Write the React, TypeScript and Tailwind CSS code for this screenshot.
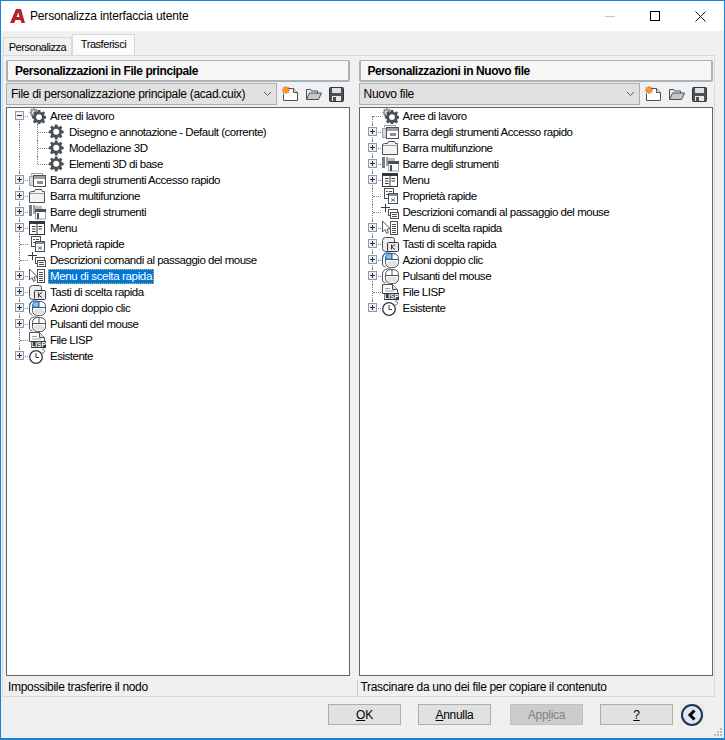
import type { ReactNode } from "react";

type IconName =
  | "workspaces" | "gear" | "qat" | "ribbon" | "toolbars" | "menu" | "quick"
  | "tooltip" | "shortcut" | "keys" | "dblclick" | "mouse" | "lisp" | "legacy";

interface TreeRow {
  label: string;
  icon: IconName;
  plus?: boolean;
  minus?: boolean;
  child?: boolean;
  selected?: boolean;
}

const gearPath =
  "M6.6 0h2.8l.4 2.2 1.2.5L12.900 1.400l2 2-1.300 1.900.5 1.200 2.200.4v2.800l-2.200.4-.5 1.200 1.300 1.900-2 2-1.900-1.300-1.200.5-.4 2.200H6.600l-.4-2.200-1.200-.5-1.900 1.300-2-2 1.300-1.900-.5-1.200L-.100 9.400V6.600l2.200-.4.500-1.200L1.300 3.100l2-2L5 2.700l1.200-.5z";

function Gear({ x = 0, y = 0, s = 1, fill = "#4b5055" }: { x?: number; y?: number; s?: number; fill?: string }) {
  return (
    <g transform={`translate(${x} ${y}) scale(${s})`}>
      <path d={gearPath} fill={fill} />
      <circle cx="8" cy="8" r="3.300" fill="#fff" />
    </g>
  );
}

function TreeIcon({ name }: { name: IconName }) {
  const dark = "#4b5055";
  const mid = "#9aa0a6";
  let body: ReactNode = null;
  if (name === "workspaces") {
    body = (
      <>
        <Gear x={1.500} y={0} s={0.55} fill="#8a8f94" />
        <Gear x={4} y={2} s={0.88} />
      </>
    );
  } else if (name === "gear") {
    body = <Gear x={1} y={0.500} s={0.9} />;
  } else if (name === "qat") {
    body = (
      <>
        <path d="M3.500 3.500V1.500h11v2" fill="none" stroke={mid} />
        <rect x="1.500" y="4.500" width="4" height="9" fill="#d8d8d8" stroke={mid} />
        <rect x="5.500" y="3.500" width="12" height="11" fill="#fff" stroke={dark} />
        <rect x="6" y="4" width="11" height="3" fill="#9aa0a6" />
        <rect x="9" y="9" width="6" height="3" fill="#8a8f94" />
      </>
    );
  } else if (name === "ribbon") {
    body = (
      <>
        <path d="M1.500 14.500v-10l2-1h3l1-2h6l1 2h2v11z" fill="#f4f4f4" stroke={dark} />
        <path d="M2 5.500h15" stroke={mid} />
      </>
    );
  } else if (name === "toolbars") {
    body = (
      <>
        <rect x="1" y="1" width="3" height="11" fill="#777c82" />
        <rect x="5" y="2" width="9" height="3" fill="#b8bcc0" />
        <rect x="5" y="1" width="2" height="9" fill="#9aa0a6" />
        <rect x="7.500" y="5.500" width="10" height="9.500" fill="#fff" stroke={mid} />
        <rect x="7" y="5" width="11" height="3" fill={dark} />
        <rect x="9" y="9" width="2" height="6" fill={dark} />
      </>
    );
  } else if (name === "menu") {
    body = (
      <>
        <rect x="1.500" y="1.500" width="15" height="13" fill="#fff" stroke="#33373b" />
        <rect x="2" y="2" width="14" height="2" fill="#33373b" />
        <path d="M9 3v11M4 6.500h3.500M4 9h3.500M4 11.500h3.500M10.500 6.500H14M10.500 9H14" stroke="#33373b" />
      </>
    );
  } else if (name === "quick") {
    body = (
      <>
        <rect x="3.500" y="0.500" width="9" height="10" fill="#fff" stroke={dark} />
        <path d="M5 3.500h2M8 3.500h3M5 6.500h2" stroke={dark} />
        <rect x="7.500" y="5.500" width="9" height="10" fill="#fff" stroke={dark} />
        <rect x="8" y="6" width="8" height="2" fill="#8a8f94" />
        <path d="M10 10.500l4 3M14 10.500l-4 3" stroke="#3b78a8" />
      </>
    );
  } else if (name === "tooltip") {
    body = (
      <>
        <path d="M0 3.500h9M4.500 0v8" stroke="#33373b" />
        <rect x="7.500" y="5.500" width="9" height="6" fill="#fff" stroke={dark} />
        <rect x="9.500" y="8.500" width="8" height="6" fill="#fff" stroke={dark} />
        <path d="M11 10.500h5M11 12.500h5" stroke={dark} />
      </>
    );
  } else if (name === "shortcut") {
    body = (
      <>
        <rect x="9.500" y="1.500" width="7" height="13" fill="#fff" stroke={dark} />
        <path d="M11 4.500h4M11 6.500h4M11 8.500h4M11 10.500h4M11 12.500h4" stroke={dark} />
        <path d="M1.500 1v11l2.500-2.500 1.500 4 2-1-1.500-3.500h3.500z" fill="#fff" stroke="#55595e" />
      </>
    );
  } else if (name === "keys") {
    body = (
      <>
        <path d="M1.500 4.500a3 3 0 0 1 3-3h7a2 2 0 0 1 2 2v3h-5v9h-4a3 3 0 0 1-3-3z" fill="#eee" stroke={dark} />
        <rect x="6.500" y="6.500" width="11" height="9" rx="1" fill="#e8e8e8" stroke="#33373b" />
        <path d="M10.500 8.500v5M14 8.500l-3.500 2.500 3.500 2.500" fill="none" stroke="#33373b" />
      </>
    );
  } else if (name === "dblclick" || name === "mouse") {
    body = (
      <>
        <path d="M1.500 12V6c0-3 2-5 5-5h2c2 0 3 1 3.500 2" fill="none" stroke={dark} />
        <path d="M1.500 12c0 1.500 1 2.500 3 3" fill="none" stroke={dark} />
        <rect x="4.500" y="1.500" width="13" height="14" rx="5" fill="#fff" stroke={dark} />
        <path d="M4.500 7.500h13M11 1.500v6" stroke={dark} />
        <rect x="6" y="9" width="10" height="5" rx="2" fill="#e2e2e2" />
        {name === "dblclick" && (
          <>
            <path d="M1.500 6.500c0-3 2-5.500 5-5.500" fill="none" stroke="#2b7fd6" strokeWidth="1.500" />
            <path d="M5 7V3.500C5 2.500 7 1.800 10.500 2v5z" fill="#8fc1ee" stroke="#2b7fd6" />
          </>
        )}
      </>
    );
  } else if (name === "lisp") {
    body = (
      <>
        <path d="M1.500.500h10l5 5v4h-15z" fill="#fff" stroke={dark} />
        <path d="M11.500.500v5h5" fill="#ddd" stroke={dark} />
        <path d="M4 4.500h5M4 7h9" stroke={mid} />
        <rect x="3" y="9" width="15" height="7" fill="#33373b" />
        <text x="10.500" y="15.200" textAnchor="middle" fontSize="6.500" fontWeight="700" fill="#fff" fontFamily="Liberation Sans, sans-serif">LISP</text>
      </>
    );
  } else if (name === "legacy") {
    body = (
      <>
        <circle cx="8" cy="9" r="6.300" fill="#fff" stroke="#33373b" strokeWidth="1.300" />
        <path d="M8 5v4.500h3" fill="none" stroke="#33373b" />
        <path d="M14 5c2 0 3-1 2.500-3M14 2l2.500-1.500" fill="none" stroke="#2b7fd6" />
      </>
    );
  }
  return (
    <svg width="18" height="16" viewBox="0 0 18 16" className="shrink-0">
      {body}
    </svg>
  );
}

function Expander({ minus }: { minus?: boolean }) {
  return (
    <span className="absolute left-[8px] top-[3px] flex h-[9px] w-[9px] items-center justify-center border border-[#8e9aa8] bg-[#eef0f4]">
      <span className="absolute h-px w-[5px] bg-[#1f2a44]" />
      {!minus && <span className="absolute h-[5px] w-px bg-[#1f2a44]" />}
    </span>
  );
}

function Row({ row, last, first, childLast }: { row: TreeRow; last: boolean; first: boolean; childLast?: boolean }) {
  return (
    <div className="relative flex h-4 items-center">
      {/* tree guides */}
      <span
        className={`absolute left-[12px] w-0 border-l border-dotted border-[#808080] ${
          first ? "top-[8px] bottom-0" : last ? "top-0 h-[8px]" : "top-0 bottom-0"
        }`}
      />
      {row.child ? (
        <>
          <span className={`absolute left-[30px] top-0 w-0 border-l border-dotted border-[#808080] ${childLast ? "h-[8px]" : "h-4"}`} />
          <span className="absolute left-[31px] top-[8px] w-[11px] border-t border-dotted border-[#808080]" />
        </>
      ) : (
        <span className="absolute left-[13px] top-[8px] w-[8px] border-t border-dotted border-[#808080]" />
      )}
      {row.plus && <Expander />}
      {row.minus && <Expander minus />}
      <div className={`relative flex items-center ${row.child ? "pl-[41px]" : "pl-[21px]"}`}>
        <TreeIcon name={row.icon} />
        <span
          className={`h-[15px] whitespace-nowrap px-px text-[11.5px] leading-[13px] ${
            row.selected
              ? "border border-dotted border-[#f2b056] bg-[#0078d7] tracking-[-0.35px] text-white"
              : "border border-transparent tracking-[-0.48px] text-black"
          } ${row.child ? "ml-px" : "ml-[2px]"}`}
        >
          {row.label}
        </span>
      </div>
    </div>
  );
}

const leftRows: TreeRow[] = [
  { label: "Aree di lavoro", icon: "workspaces", minus: true },
  { label: "Disegno e annotazione - Default (corrente)", icon: "gear", child: true },
  { label: "Modellazione 3D", icon: "gear", child: true },
  { label: "Elementi 3D di base", icon: "gear", child: true },
  { label: "Barra degli strumenti Accesso rapido", icon: "qat", plus: true },
  { label: "Barra multifunzione", icon: "ribbon", plus: true },
  { label: "Barre degli strumenti", icon: "toolbars", plus: true },
  { label: "Menu", icon: "menu", plus: true },
  { label: "Proprietà rapide", icon: "quick" },
  { label: "Descrizioni comandi al passaggio del mouse", icon: "tooltip" },
  { label: "Menu di scelta rapida", icon: "shortcut", plus: true, selected: true },
  { label: "Tasti di scelta rapida", icon: "keys", plus: true },
  { label: "Azioni doppio clic", icon: "dblclick", plus: true },
  { label: "Pulsanti del mouse", icon: "mouse", plus: true },
  { label: "File LISP", icon: "lisp" },
  { label: "Esistente", icon: "legacy", plus: true },
];

const rightRows: TreeRow[] = leftRows
  .filter((r) => !r.child)
  .map((r) => ({ ...r, minus: false, selected: false }));

function ToolIcons() {
  return (
    <div className="ml-[5px] flex items-center gap-[6px]">
      <svg width="17" height="16" viewBox="0 0 17 16">
        <path d="M5.500 2.500h6l4 4v8h-14v-7" fill="#fff" stroke="#4b5055" />
        <path d="M11.500 2.500v4h4" fill="#e4e4e4" stroke="#4b5055" />
        <path d="M4 0l.8 2 2-.8-.8 2 2 .8-2 .8.800 2-2-.8-.8 2-.8-2-2 .8.800-2-2-.8 2-.8-.8-2 2 .8z" fill="#f7a11a" stroke="#e8471c" strokeWidth="0.500" />
      </svg>
      <svg width="17" height="16" viewBox="0 0 17 16">
        <path d="M1.500 13.500v-10h4l1 1.500h6v2" fill="#eee" stroke="#4b5055" />
        <path d="M1.500 13.500l3-6.500h12l-3 6.500z" fill="#c4c9ce" stroke="#4b5055" />
      </svg>
      <svg width="15" height="15" viewBox="0 0 15 15" className="ml-[1px]">
        <rect x="0.500" y="0.500" width="14" height="14" rx="1" fill="#4b5055" stroke="#33373b" />
        <rect x="3" y="1" width="9" height="5" fill="#dfe2e5" />
        <rect x="3" y="9" width="9" height="5" fill="#e8e8e8" />
        <rect x="4" y="10" width="3" height="4" fill="#4b5055" />
      </svg>
    </div>
  );
}

function Pane({
  title, combo, comboWidth, rows, status, border,
}: {
  title: string; combo: string; comboWidth: string; rows: TreeRow[]; status: string; border?: boolean;
}) {
  return (
    <div className={`flex min-h-0 flex-col ${border ? "w-[356px] pl-px" : "w-[344px]"}`}>
      <div className="flex h-[22px] items-center rounded-[2px] border-2 border-t border-[#a9b1b9] bg-[#f6f6f6] pl-[7px] text-[12px] font-bold tracking-[-0.42px] text-black">
        {title}
      </div>
      <div className="mt-px flex h-[22px] items-center">
        <div className={`flex h-[22px] ${comboWidth} items-center justify-between border border-[#adadad] bg-[#e1e1e1] pl-[4px] pr-[4px] text-[12px] tracking-[-0.29px] text-black`}>
          <span className="whitespace-nowrap">{combo}</span>
          <svg width="9" height="6" viewBox="0 0 9 6">
            <path d="M1 1l3.500 3.500L8 1" fill="none" stroke="#606060" />
          </svg>
        </div>
        <ToolIcons />
      </div>
      <div className="mt-[2px] h-[569px] border border-[#646464] bg-white">
        {rows.map((r, i) => (
          <Row
            key={r.label}
            row={r}
            first={i === 0}
            last={i === rows.length - 1}
            childLast={r.child && !rows[i + 1]?.child}
          />
        ))}
      </div>
      <div className="mt-[4px] h-[14px] pl-[2px] text-[12px] leading-[14px] tracking-[-0.32px] text-black">{status}</div>
    </div>
  );
}

function DialogButton({ children, disabled, className = "" }: { children: ReactNode; disabled?: boolean; className?: string }) {
  return (
    <div
      className={`flex h-[21px] w-[73px] items-center justify-center border text-[12px] tracking-[-0.3px] ${className} ${
        disabled ? "border-[#bfbfbf] bg-[#cccccc] text-[#838383]" : "border-[#adadad] bg-[#e1e1e1] text-black"
      }`}
    >
      {children}
    </div>
  );
}

export default function App() {
  return (
    <div
      className="flex h-[740px] w-[725px] flex-col overflow-hidden border border-b-2 border-[#1683d8] bg-[#f0f0f0]"
      style={{ fontFamily: '"Liberation Sans", Arial, sans-serif' }}
    >
      {/* title bar */}
      <div className="flex h-[30px] shrink-0 items-center bg-white">
        <svg width="16" height="16" viewBox="0 0 16 16" className="ml-[9px]">
          <path d="M0 15L6 1h5l4 14h-3.500l-1-3H5.500l-1.300 3zM6.500 9h3L8.300 4.500z" fill="#b5222b" />
        </svg>
        <span className="ml-[4px] text-[12px] tracking-[-0.16px] text-black">Personalizza interfaccia utente</span>
        <div className="ml-auto flex items-center">
          <span className="h-px w-[10px] bg-[#c4c4c4]" />
          <span className="ml-[35px] h-[10px] w-[10px] border border-black" />
          <svg width="11" height="11" viewBox="0 0 11 11" className="ml-[35px] mr-[18px]">
            <path d="M.5.500l10 10M10.500.500l-10 10" stroke="#111" />
          </svg>
        </div>
      </div>

      {/* tabs */}
      <div className="flex h-[24px] shrink-0 items-end pl-[2px] pt-[3px]">
        <div className="flex h-[18px] w-[69px] items-center justify-center border border-b-0 border-[#d9d9d9] bg-[#f0f0f0] pt-px text-[11px] tracking-[-0.45px] text-black">
          Personalizza
        </div>
        <div className="flex h-[21px] w-[63px] items-center justify-center border border-b-0 border-[#d9d9d9] bg-[#fafafa] pb-px text-[11px] tracking-[-0.45px] text-black">
          Trasferisci
        </div>
      </div>

      {/* tab page */}
      <div className="ml-px flex h-[642px] w-[713px] shrink-0 justify-between border border-[#d9d9d9] pl-[3px] pr-px pt-[4px]">
        <Pane
          title="Personalizzazioni in File principale"
          combo="File di personalizzazione principale (acad.cuix)"
          comboWidth="w-[271px]"
          rows={leftRows}
          status="Impossibile trasferire il nodo"
        />
        <div className="ml-[7px] mt-[620px] h-[16px] w-px bg-[#c8c8c8]" />
        <Pane
          title="Personalizzazioni in Nuovo file"
          combo="Nuovo file"
          comboWidth="w-[281px]"
          rows={rightRows}
          status="Trascinare da uno dei file per copiare il contenuto"
          border
        />
      </div>

      {/* buttons */}
      <div className="relative flex flex-1 items-start pl-[327px] pt-[7px]">
        <div className="flex gap-[17px]">
          <DialogButton><span><u>O</u>K</span></DialogButton>
          <DialogButton><span><u>A</u>nnulla</span></DialogButton>
          <DialogButton disabled className="ml-[2px]"><span>App<u>l</u>ica</span></DialogButton>
          <DialogButton><u>?</u></DialogButton>
        </div>
        <div className="ml-[7px] flex h-[21px] w-[24px] items-center justify-center bg-[#eeeadb]">
          <div className="flex h-[22px] w-[22px] items-center justify-center rounded-full border-2 border-[#14335e] bg-[#dfe6f2]">
            <svg width="10" height="12" viewBox="0 0 10 12">
              <path d="M7.500 1.500L3 6l4.500 4.500" fill="none" stroke="#000" strokeWidth="3" />
            </svg>
          </div>
        </div>
        <svg width="9" height="9" viewBox="0 0 9 9" className="absolute bottom-[1px] right-[1px]">
          <path d="M6 0h2v2H6zM3 3h2v2H3zM6 3h2v2H6zM0 6h2v2H0zM3 6h2v2H3zM6 6h2v2H6z" fill="#bdbdbd" />
        </svg>
      </div>
    </div>
  );
}
